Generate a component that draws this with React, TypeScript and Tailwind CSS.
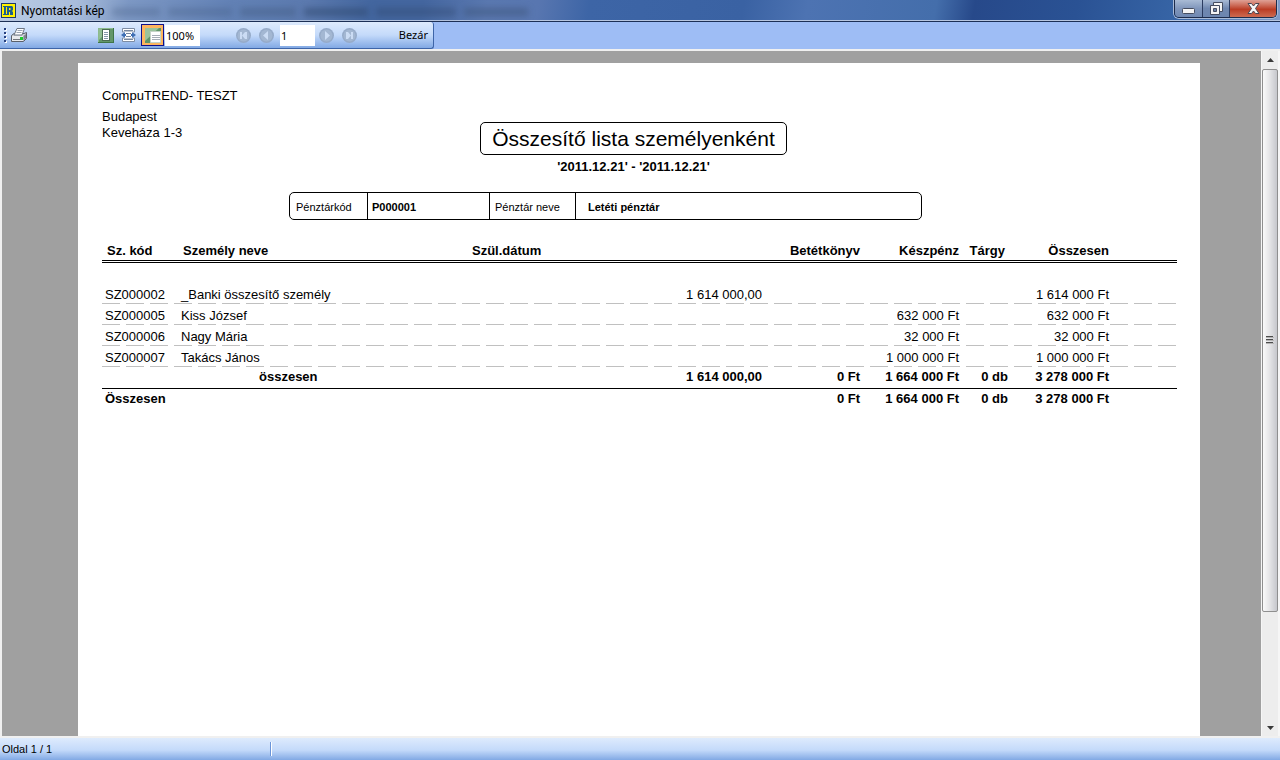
import React from 'react'

const rows = [
  { code: 'SZ000002', name: '_Banki összesítő személy', deposit: '1 614 000,00', book: '', cash: '', items: '', total: '1 614 000 Ft' },
  { code: 'SZ000005', name: 'Kiss József', deposit: '', book: '', cash: '632 000 Ft', items: '', total: '632 000 Ft' },
  { code: 'SZ000006', name: 'Nagy Mária', deposit: '', book: '', cash: '32 000 Ft', items: '', total: '32 000 Ft' },
  { code: 'SZ000007', name: 'Takács János', deposit: '', book: '', cash: '1 000 000 Ft', items: '', total: '1 000 000 Ft' },
]

const TitleBar = () => {
  return (
    <header className="relative flex h-[22px] shrink-0 items-start justify-between overflow-hidden border-b border-[#1c2f55] bg-[linear-gradient(100deg,#b9cbe4_0%,#a9bddb_6%,#7d98c4_10%,#6281b5_18%,#5b79ae_24%,#43669f_29%,#44669f_33%,#5a78b0_38%,#5876b0_42%,#3d65a6_46%,#3a62a3_58%,#4d73b2_63%,#446eab_73%,#27498a_76%,#2a5294_84%,#3765a6_92%,#7f9cca_100%)]">
      <div className="absolute inset-x-0 bottom-0 h-px bg-[#b7c6e0]" />
      {/* content of the window behind, seen through the glass */}
      <div className="absolute top-2 left-28 flex gap-2 blur-[3px]">
        <div className="h-2 w-12 bg-[#3c5478]/30" />
        <div className="h-2 w-16 bg-[#3c5478]/30" />
        <div className="h-2 w-14 bg-[#3c5478]/40" />
        <div className="h-2 w-16 bg-[#2c4468]/50" />
        <div className="h-2 w-20 bg-[#2c4468]/40" />
        <div className="h-2 w-16 bg-[#3c5478]/50" />
      </div>
      <div className="relative flex h-[21px] items-center gap-[5px]">
        <svg width="15" height="15" viewBox="0 0 15 15" className="ml-px">
          <rect width="15" height="15" fill="#1c3a6a" />
          <rect x="1" y="1" width="13" height="13" fill="#fff200" />
          <path d="M2 3h9l1 1v3l-1 1 1 1v3H9V9H8v3H2v-1h1V4H2zM8 5v2h1.500V5zM5 4v7h1V4z" fill="#1b5f8c" fillRule="evenodd" />
        </svg>
        <h1 className="font-[Roboto,'Noto_Sans',sans-serif] text-xs leading-5 text-black">Nyomtatási kép</h1>
      </div>
      <div className="relative mr-[3px] flex h-[18px] overflow-hidden rounded-b-[5px] border border-t-0 border-[#1d2c4c] shadow-[0_0_0_1px_#a9bbd8]">
        <button aria-label="Kis méret" className="flex w-7 items-center justify-center border-r border-[#2b3c60] bg-linear-to-b from-[#a9bbd5] via-[#8096bb] via-50% to-[#7089b2]">
          <svg width="13" height="6" viewBox="0 0 13 6" className="mt-1"><rect x=".5" y=".5" width="12" height="5" rx="1" fill="#f4f4f4" stroke="#454d60" /></svg>
        </button>
        <button aria-label="Előző méret" className="flex w-[27px] items-center justify-center border-r border-[#2b3c60] bg-linear-to-b from-[#a9bbd5] via-[#7088b0] via-50% to-[#6c86b0]">
          <svg width="13" height="13" viewBox="0 0 13 13" fill="#f4f4f4" stroke="#454d60">
            <path d="M3.500.5h9v9h-9z" />
            <path d="M.5 3.500h9v9h-9z" />
            <path d="M3.500 6.500h3v3h-3z" fill="#6c82a8" />
          </svg>
        </button>
        <button aria-label="Bezárás" className="flex w-[46px] items-center justify-center bg-linear-to-b from-[#dfa196] via-[#bb3c24] via-55% to-[#cd6a50]">
          <svg width="13" height="11" viewBox="0 0 13 11"><path d="M1 .5h3.500l2 2.500 2-2.500H12L8.500 5.500l3.500 5H8.500l-2-2.500-2 2.500H1l3.500-5z" fill="#f6f6f6" stroke="#4a4550" /></svg>
        </button>
      </div>
    </header>
  )
}

const NavButton = ({ label, d }: { label: string; d: string }) => (
  <button aria-label={label} className="flex w-[23px] justify-center" disabled>
    <svg width="15" height="15" viewBox="0 0 15 15">
      <circle cx="7.500" cy="7.500" r="7.500" fill="#96abc9" />
      <circle cx="7.500" cy="7.500" r="6" fill="#a3b7d2" />
      <path d={d} fill="#cbdcf4" />
    </svg>
  </button>
)

const Toolbar = () => {
  return (
    <div className="flex h-[27px] shrink-0 items-start bg-[#9ebdf5] font-['Noto_Sans',sans-serif] text-[11px] text-black">
      <div className="flex h-[27px] w-[434px] items-center rounded-r-[3px] border-r border-b border-[#3e65a8] bg-linear-to-b from-[#deebfd] via-[#c4dafa] via-50% to-[#82a9e4]">
        <svg width="3" height="15" viewBox="0 0 3 15" className="ml-1">
          <path d="M1 1h2v2H1zM1 5h2v2H1zM1 9h2v2H1zM1 13h2v2H1z" fill="#fff" />
          <path d="M0 0h2v2H0zM0 4h2v2H0zM0 8h2v2H0zM0 12h2v2H0z" fill="#27417f" />
        </svg>
        <button aria-label="Nyomtatás" className="ml-1">
          <svg width="16" height="16" viewBox="0 0 16 16">
            <path d="M.5 8.500l2.500-2h10l2.500-1v6l-3 3H.5z" fill="#c9cdd3" stroke="#5a606a" />
            <path d="M6 1.500h7.500L11 8H3z" fill="#fff" stroke="#6d7684" />
            <path d="M6.500 3.500h5M5.500 5.500h5" stroke="#9aa4b2" />
            <path d="M1 9h11v5H1z" fill="#e9ebee" />
            <path d="M12.500 9v5L15 11V7z" fill="#7d838c" />
            <path d="M2 12.500h7" stroke="#70757d" />
            <rect x="9" y="10" width="3" height="3" fill="#19cf2c" />
          </svg>
        </button>
        <button aria-label="Teljes oldal" className="ml-[71px]">
          <svg width="16" height="15" viewBox="0 0 16 15">
            <rect width="16" height="15" fill="#3f7548" />
            <path d="M0 0h15v1L1 14H0z" fill="#8cba8d" />
            <path d="M1 1h14v13H1z" fill="#62966a" />
            <path d="M1 1h10L1 12z" fill="#90bd92" />
            <rect x="4.500" y="1.500" width="7" height="11" fill="#fff" stroke="#4b6c53" />
            <path d="M6 4.500h4M6 6.500h4M6 8.500h4M6 10.500h4" stroke="#8797aa" />
          </svg>
        </button>
        <button aria-label="Oldalszélesség" className="ml-[7px]">
          <svg width="15" height="14" viewBox="0 0 15 14">
            <path d="M1.500.5h12v3.500h-12zM1.500 13.500h12V10h-12z" fill="#fff" stroke="#7d8ca3" />
            <path d="M3 4h9v6H3z" fill="#fff" />
            <path d="M3 2.500h9M5 5.500h5M5 8.500h5M3 11.500h9" stroke="#76879f" />
            <path d="M0 7l4-3v2h1v2H4v2zM15 7l-4-3v2h-1v2h1v2z" fill="#3f6fb4" />
          </svg>
        </button>
        <button aria-label="Eredeti méret" className="ml-[5px] flex h-[22px] w-[23px] items-center justify-center border border-[#10108c] bg-[#fdb55e]">
          <svg width="16" height="15" viewBox="0 0 16 15">
            <rect width="16" height="15" fill="#609568" />
            <path d="M0 0h14L0 13z" fill="#9ac39b" />
            <path d="M5.500 3.500h10v11h-10z" fill="#fff" stroke="#c5d3c6" />
            <path d="M7 7.500h8M7 9.500h8M7 11.500h8" stroke="#a5acb5" />
          </svg>
        </button>
        <input aria-label="Nagyítás" defaultValue="100%" className="ml-px h-[21px] w-[35px] bg-white pl-px text-[11px] outline-none" />
        <div className="ml-8 flex">
          <NavButton label="Első oldal" d="M4 4h2v7H4zM11 4v7H9L6 7.500 9 4z" />
          <NavButton label="Előző oldal" d="M9 3v9L4 7.500z" />
        </div>
        <input aria-label="Oldalszám" defaultValue="1" className="ml-[2px] h-[21px] w-[35px] bg-white pl-px text-[11px] outline-none" />
        <div className="flex">
          <NavButton label="Következő oldal" d="M6 3v9l5-4.500z" />
          <NavButton label="Utolsó oldal" d="M9 4h2v7H9zM4 4h2l3 3.500L6 11H4z" />
        </div>
        <button className="mr-[5px] ml-auto">Bezár</button>
      </div>
    </div>
  )
}

const Report = () => {
  return (
    <main className="mt-3 mr-[61px] ml-[76px] min-w-0 flex-1 bg-white pt-[25px] pr-[23px] pl-6 font-['Liberation_Sans',Arial,sans-serif] text-[13px] leading-4 text-black">
      <div className="flex">
        <address className="w-[378px] not-italic">
          <p>CompuTREND- TESZT</p>
          <p className="mt-[5px]">Budapest</p>
          <p>Keveháza 1-3</p>
        </address>
        <div className="mt-[34px] w-[307px] text-center">
          <h2 className="h-[33px] rounded-[5px] border border-black text-[21px] leading-8 whitespace-nowrap">Összesítő lista személyenként</h2>
          <p className="leading-6 font-bold">'2011.12.21' - '2011.12.21'</p>
        </div>
      </div>

      <dl className="mt-[13px] ml-[187px] flex h-7 w-[633px] items-stretch rounded-[5px] border border-black text-[11px] leading-7">
        <dt className="w-[77px] pl-[6px]">Pénztárkód</dt>
        <dd className="w-[122px] border-l border-black pl-1 font-bold">P000001</dd>
        <dt className="w-[86px] border-l border-black pl-[5px]">Pénztár neve</dt>
        <dd className="flex-1 border-l border-black pl-3 font-bold">Letéti pénztár</dd>
      </dl>

      <table className="mt-5 w-full table-fixed border-collapse text-right whitespace-nowrap">
        <colgroup>
          <col className="w-[76px]" />
          <col />
          <col className="w-[115px]" />
          <col className="w-[178px]" />
          <col className="w-[98px]" />
          <col className="w-[99px]" />
          <col className="w-[49px]" />
          <col className="w-[101px]" />
          <col className="w-[68px]" />
        </colgroup>
        <thead>
          <tr className="h-[21px] border-b-3 border-double border-black *:pt-[2px]">
            <th className="pl-[5px] text-left">Sz. kód</th>
            <th className="pl-[5px] text-left">Személy neve</th>
            <th className="pl-[3px] text-left">Szül.dátum</th>
            <th />
            <th>Betétkönyv</th>
            <th>Készpénz</th>
            <th className="pr-[3px]">Tárgy</th>
            <th>Összesen</th>
            <th />
          </tr>
        </thead>
        <tbody>
          <tr className="h-[22px]"><td colSpan={9} /></tr>
          {rows.map((row) => (
            <tr key={row.code} className="h-[21px] bg-[repeating-linear-gradient(90deg,#c0c0c0_0_18px,transparent_18px_24px)] bg-size-[100%_1px] bg-bottom bg-no-repeat *:pt-[2px]">
              <td className="pl-[3px] text-left">{row.code}</td>
              <td className="pl-[3px] text-left">{row.name}</td>
              <td />
              <td>{row.deposit}</td>
              <td>{row.book}</td>
              <td>{row.cash}</td>
              <td>{row.items}</td>
              <td>{row.total}</td>
              <td />
            </tr>
          ))}
        </tbody>
        <tfoot className="font-bold">
          <tr className="h-[21px] border-b border-black">
            <td />
            <td className="pl-[81px] text-left">összesen</td>
            <td />
            <td>1 614 000,00</td>
            <td>0 Ft</td>
            <td>1 664 000 Ft</td>
            <td>0 db</td>
            <td>3 278 000 Ft</td>
            <td />
          </tr>
          <tr className="h-[21px]">
            <td className="pl-[3px] text-left">Összesen</td>
            <td />
            <td />
            <td />
            <td>0 Ft</td>
            <td>1 664 000 Ft</td>
            <td>0 db</td>
            <td>3 278 000 Ft</td>
            <td />
          </tr>
        </tfoot>
      </table>
    </main>
  )
}

const ScrollBar = () => {
  return (
    <div className="flex w-[19px] shrink-0 flex-col border-r-2 border-l border-[#f6f6f6] bg-[#ededed]">
      <button aria-label="Fel" className="flex h-[18px] items-center justify-center">
        <svg width="7" height="4" viewBox="0 0 7 4"><path d="M3.500 0L7 4H0z" fill="#3a3a3a" /></svg>
      </button>
      <div className="flex flex-[543] items-center justify-center rounded-[2px] border border-[#8f8f8f] bg-linear-to-r from-[#fafafa] via-[#e6e6e8] via-45% to-[#c6c7cc]">
        <svg width="8" height="9" viewBox="0 0 8 9">
          <path d="M0 .5h7M0 3.500h7M0 6.500h7" stroke="#4c4c4c" />
          <path d="M0 1.500h8M0 4.500h8M0 7.500h8" stroke="#b4b4b4" />
        </svg>
      </div>
      <div className="flex-[108]" />
      <button aria-label="Le" className="flex h-[16px] items-center justify-center">
        <svg width="7" height="4" viewBox="0 0 7 4"><path d="M3.500 4L7 0H0z" fill="#3a3a3a" /></svg>
      </button>
    </div>
  )
}

const App = () => {
  return (
    <div className="flex h-screen flex-col overflow-hidden bg-[#f0f0f0]">
      <TitleBar />
      <Toolbar />
      <div className="mt-[2px] mb-[2px] ml-[2px] flex min-h-0 flex-1">
        <div className="flex min-w-0 flex-1 bg-[#a0a0a0]">
          <Report />
        </div>
        <ScrollBar />
      </div>
      <footer className="flex h-[22px] shrink-0 items-center bg-linear-to-b from-[#deebfd] via-[#c4dafa] via-55% to-[#82a9e4] font-['Liberation_Sans',Arial,sans-serif] text-[11px] text-black">
        <p className="w-[270px] pl-[2px]">Oldal 1 / 1</p>
        <div className="h-[14px] w-[2px] border-r border-l border-r-white border-l-[#6a94d8]" />
      </footer>
    </div>
  )
}

export default App
